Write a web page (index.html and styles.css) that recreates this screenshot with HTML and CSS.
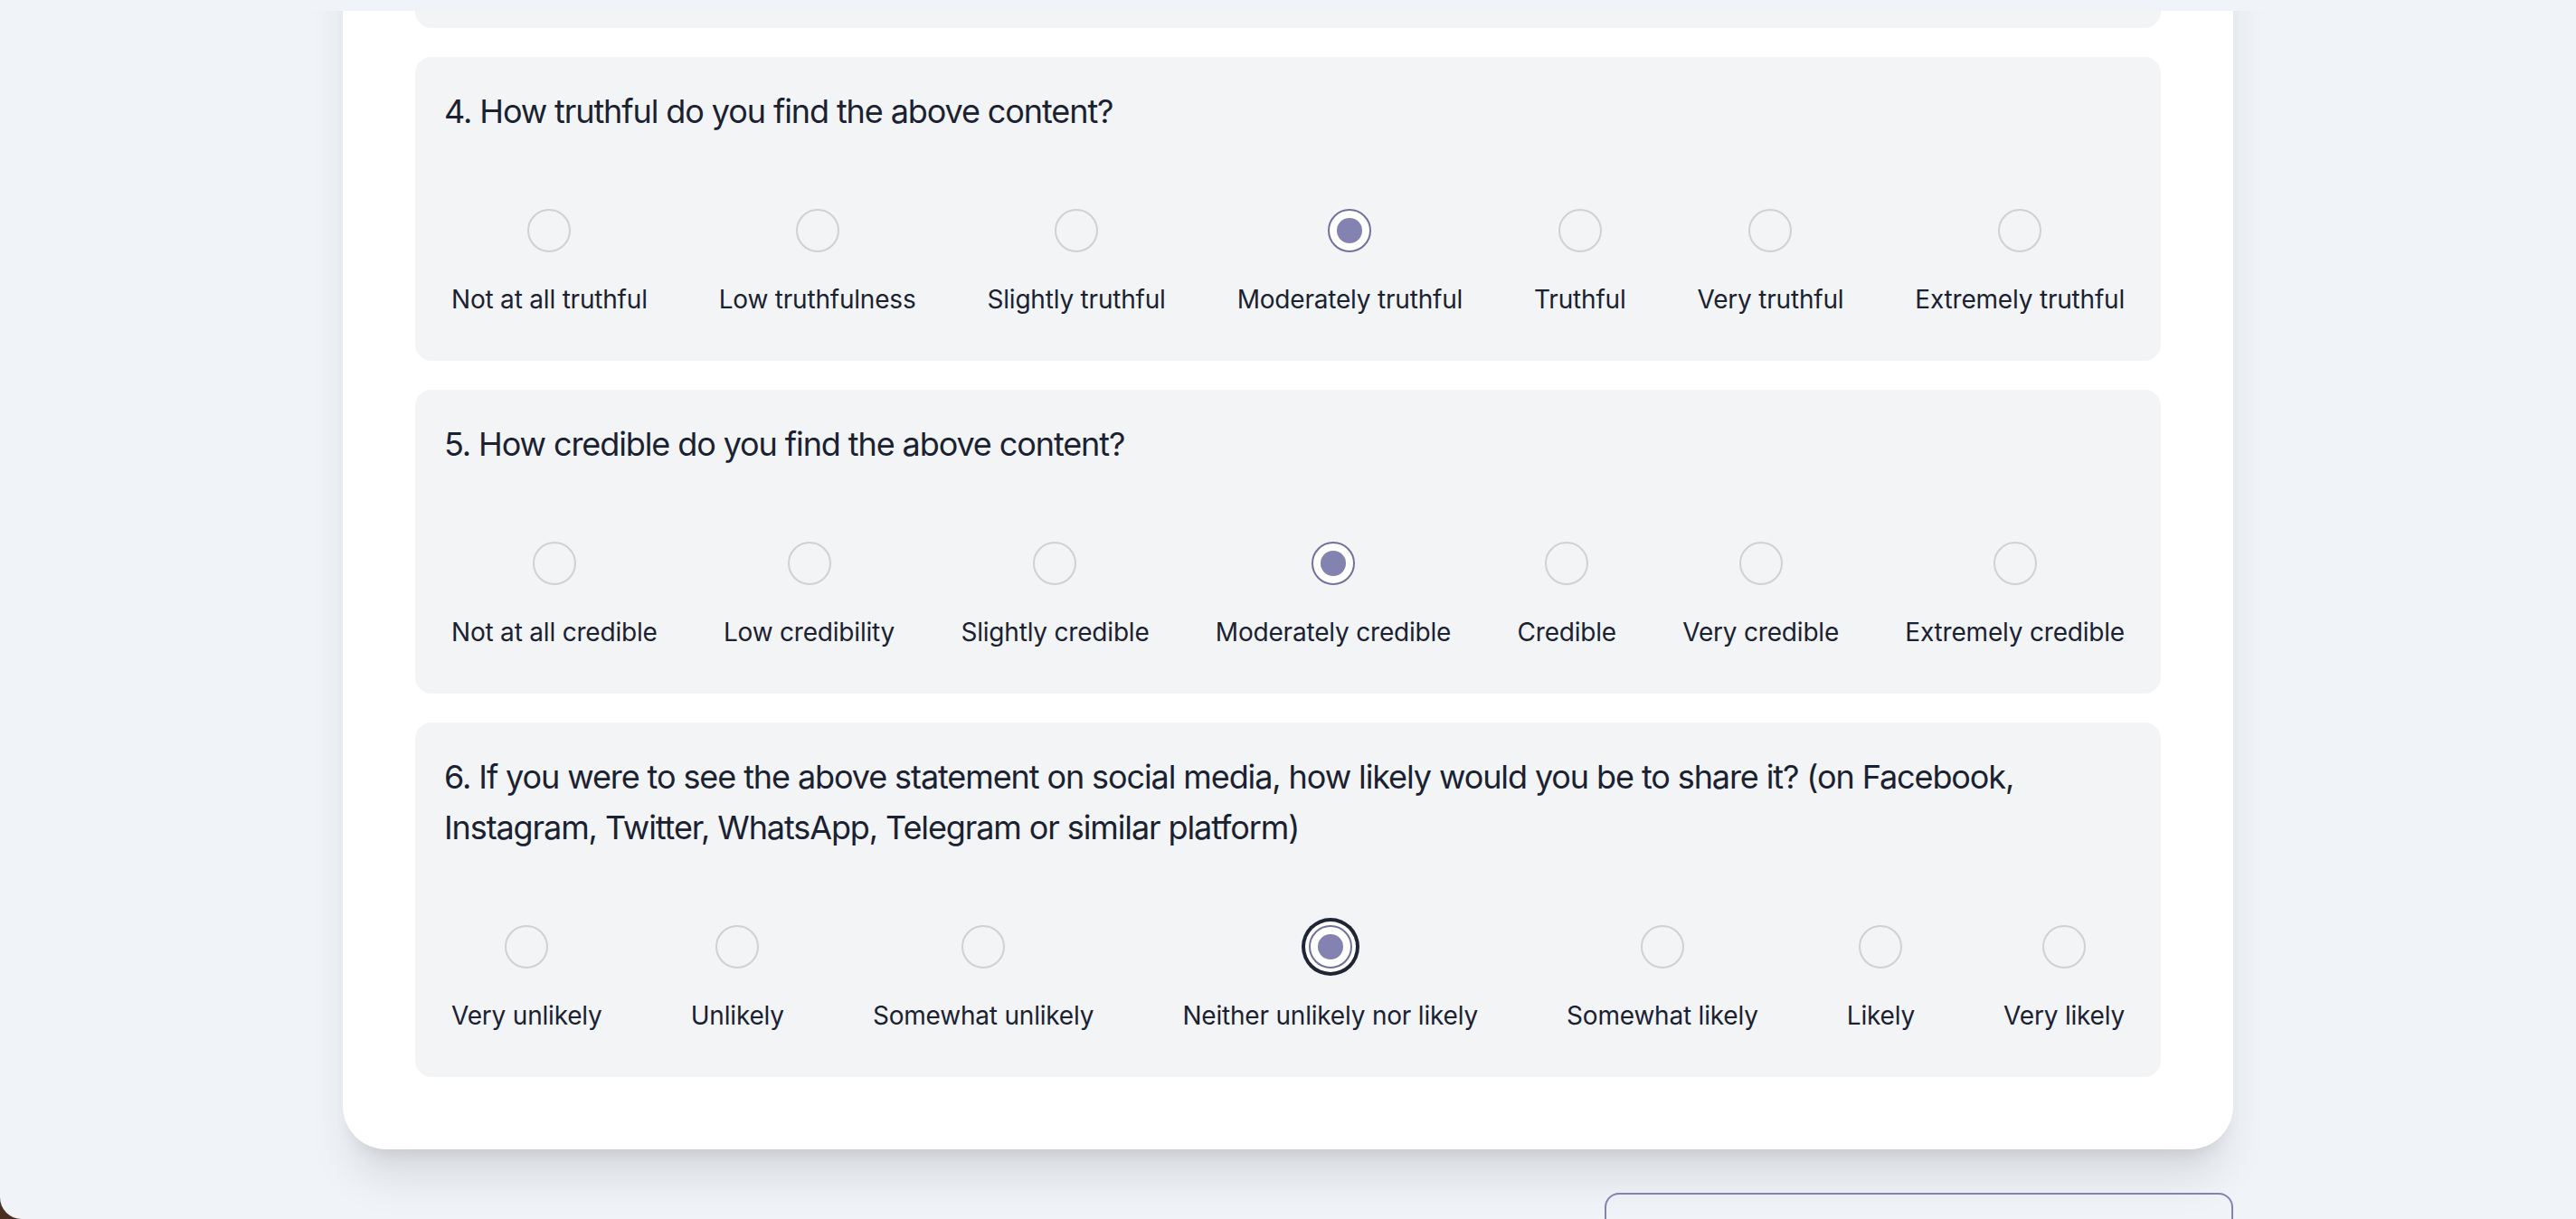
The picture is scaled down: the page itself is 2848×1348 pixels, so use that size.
FILE: index.html
```html
<!DOCTYPE html>
<html lang="en">
<head>
<meta charset="utf-8">
<title>Survey</title>
<link rel="stylesheet" href="styles.css">
</head>
<body>
<div class="window">
  <div class="topbar"></div>
  <main class="page">
    <section class="card">
      <div class="question">
        <p class="q-title">3. How accurate do you find the above content?</p>
        <div class="options">
          <label class="option"><span class="radio"></span><span class="label">Not at all accurate</span></label>
          <label class="option"><span class="radio"></span><span class="label">Low accuracy</span></label>
          <label class="option"><span class="radio"></span><span class="label">Slightly accurate</span></label>
          <label class="option"><span class="radio checked"><span class="dot"></span></span><span class="label">Moderately accurate</span></label>
          <label class="option"><span class="radio"></span><span class="label">Accurate</span></label>
          <label class="option"><span class="radio"></span><span class="label">Very accurate</span></label>
          <label class="option"><span class="radio"></span><span class="label">Extremely accurate</span></label>
        </div>
      </div>

      <div class="question">
        <p class="q-title">4. How truthful do you find the above content?</p>
        <div class="options">
          <label class="option"><span class="radio"></span><span class="label">Not at all truthful</span></label>
          <label class="option"><span class="radio"></span><span class="label">Low truthfulness</span></label>
          <label class="option"><span class="radio"></span><span class="label">Slightly truthful</span></label>
          <label class="option"><span class="radio checked"><span class="dot"></span></span><span class="label">Moderately truthful</span></label>
          <label class="option"><span class="radio"></span><span class="label">Truthful</span></label>
          <label class="option"><span class="radio"></span><span class="label">Very truthful</span></label>
          <label class="option"><span class="radio"></span><span class="label">Extremely truthful</span></label>
        </div>
      </div>

      <div class="question">
        <p class="q-title">5. How credible do you find the above content?</p>
        <div class="options">
          <label class="option"><span class="radio"></span><span class="label">Not at all credible</span></label>
          <label class="option"><span class="radio"></span><span class="label">Low credibility</span></label>
          <label class="option"><span class="radio"></span><span class="label">Slightly credible</span></label>
          <label class="option"><span class="radio checked"><span class="dot"></span></span><span class="label">Moderately credible</span></label>
          <label class="option"><span class="radio"></span><span class="label">Credible</span></label>
          <label class="option"><span class="radio"></span><span class="label">Very credible</span></label>
          <label class="option"><span class="radio"></span><span class="label">Extremely credible</span></label>
        </div>
      </div>

      <div class="question">
        <p class="q-title">6. If you were to see the above statement on social media, how likely would you be to share it? (on Facebook, Instagram, Twitter, WhatsApp, Telegram or similar platform)</p>
        <div class="options">
          <label class="option"><span class="radio"></span><span class="label">Very unlikely</span></label>
          <label class="option"><span class="radio"></span><span class="label">Unlikely</span></label>
          <label class="option"><span class="radio"></span><span class="label">Somewhat unlikely</span></label>
          <label class="option"><span class="radio checked focused"><span class="dot"></span></span><span class="label">Neither unlikely nor likely</span></label>
          <label class="option"><span class="radio"></span><span class="label">Somewhat likely</span></label>
          <label class="option"><span class="radio"></span><span class="label">Likely</span></label>
          <label class="option"><span class="radio"></span><span class="label">Very likely</span></label>
        </div>
      </div>
    </section>

    <div class="actions">
      <button class="next-btn" type="button">Next</button>
    </div>
  </main>
</div>
</body>
</html>
```

FILE: styles.css
```css
html {
  background: #4a2e1f;
}

body {
  margin: 0;
  font-family: Inter, "Noto Sans", "Liberation Sans", sans-serif;
  color: #1f2937;
}

.window {
  background: #f0f3f8;
  height: 100vh;
  border-bottom-left-radius: 24px;
  overflow: hidden;
}

.topbar {
  position: fixed;
  top: 0;
  left: 0;
  right: 0;
  height: 12px;
  background: #f0f3f8;
  z-index: 10;
}

.page {
  width: 2090px;
  margin: 0 auto;
  padding-bottom: 120px;
}

.card {
  margin-top: -385px;
  background: #ffffff;
  border-radius: 48px;
  padding: 80px;
  display: flex;
  flex-direction: column;
  gap: 32px;
  box-shadow: 0 40px 50px -10px rgba(0, 0, 0, 0.1), 0 16px 20px -12px rgba(0, 0, 0, 0.1);
}

.question {
  background: #f3f4f6;
  border-radius: 18px;
  padding: 32px 32px 48px;
}

.q-title {
  margin: 0;
  font-size: 36px;
  line-height: 56px;
  font-weight: 400;
  letter-spacing: -1.1px;
  color: #1a2231;
}

.options {
  display: flex;
  justify-content: space-between;
  padding: 0 8px;
  margin-top: 80px;
}

.option {
  display: flex;
  flex-direction: column;
  align-items: center;
  gap: 32px;
}

.radio {
  width: 48px;
  height: 48px;
  box-sizing: border-box;
  border-radius: 50%;
  border: 2px solid #d1d1d3;
  display: flex;
  align-items: center;
  justify-content: center;
}

.radio.checked {
  border-color: #72709c;
  background: #ffffff;
}

.radio.focused {
  box-shadow: 0 0 0 4px #ffffff, 0 0 0 8px #1e2535;
}

.dot {
  width: 28px;
  height: 28px;
  border-radius: 50%;
  background: #8482b0;
}

.label {
  font-size: 28px;
  line-height: 40px;
  letter-spacing: -0.2px;
  color: #1a2231;
  white-space: nowrap;
}

.actions {
  display: flex;
  justify-content: flex-end;
  margin-top: 48px;
}

.next-btn {
  width: 695px;
  height: 100px;
  border: 2px solid #8482b0;
  border-radius: 16px;
  background: transparent;
  font-family: inherit;
  font-size: 32px;
  color: #8482b0;
}
```
